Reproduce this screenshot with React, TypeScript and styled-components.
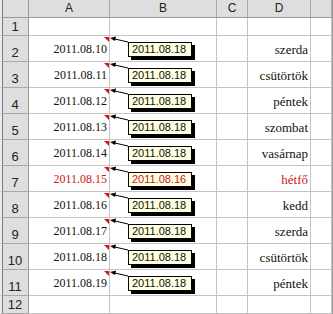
import React from 'react';
import styled, { createGlobalStyle } from 'styled-components';

const GlobalStyle = createGlobalStyle`
    html, body {
        margin: 0;
        padding: 0;
        background: #ffffff;
    }
    * {
        box-sizing: border-box;
    }
`;

interface RowData {
    date: string;
    note: string;
    day: string;
    holiday?: boolean;
}

const rows: RowData[] = [
    { date: '2011.08.10', note: '2011.08.18', day: 'szerda' },
    { date: '2011.08.11', note: '2011.08.18', day: 'csütörtök' },
    { date: '2011.08.12', note: '2011.08.18', day: 'péntek' },
    { date: '2011.08.13', note: '2011.08.18', day: 'szombat' },
    { date: '2011.08.14', note: '2011.08.18', day: 'vasárnap' },
    { date: '2011.08.15', note: '2011.08.16', day: 'hétfő', holiday: true },
    { date: '2011.08.16', note: '2011.08.18', day: 'kedd' },
    { date: '2011.08.17', note: '2011.08.18', day: 'szerda' },
    { date: '2011.08.18', note: '2011.08.18', day: 'csütörtök' },
    { date: '2011.08.19', note: '2011.08.18', day: 'péntek' },
];

const Sheet = styled.div`
    width: 333px;
    height: 314px;
    overflow: hidden;
    display: grid;
    grid-template-columns: 29px 81px 107px 31px 63px 21px 1px;
    grid-template-rows: 18px 18px repeat(10, 26px) 18px;
    background: #ffffff;
`;

const Corner = styled.div`
    background: #dedede;
    border-left: 2px solid #ececec;
    border-right: 1px solid #9a9a9a;
    border-bottom: 1px solid #9a9a9a;
    box-shadow: inset 1px 0 0 #7a7a7a;
`;

const ColHead = styled.div`
    background: #dedede;
    border-right: 1px solid #a8a8a8;
    border-bottom: 1px solid #9a9a9a;
    display: flex;
    align-items: flex-end;
    justify-content: center;
    padding-bottom: 1px;
    font-family: 'Liberation Sans', Arial, sans-serif;
    font-size: 12px;
    line-height: 15px;
    color: #222;
`;

const RowHead = styled.div`
    background: #dedede;
    border-left: 2px solid #ececec;
    border-right: 1px solid #9a9a9a;
    border-bottom: 1px solid #a8a8a8;
    box-shadow: inset 1px 0 0 #7a7a7a;
    display: flex;
    align-items: flex-end;
    justify-content: center;
    padding-bottom: 1px;
    font-family: 'Liberation Sans', Arial, sans-serif;
    font-size: 13px;
    line-height: 15px;
    color: #222;
`;

const Cell = styled.div<{ $red?: boolean; $size?: number }>`
    position: relative;
    border-right: 1px solid #c4c4c4;
    border-bottom: 1px solid #c4c4c4;
    display: flex;
    align-items: flex-end;
    justify-content: flex-end;
    padding: 0 2px 4px 0;
    font-family: 'Liberation Serif', 'Times New Roman', serif;
    font-size: ${p => p.$size ?? 12}px;
    line-height: 15px;
    color: ${p => (p.$red ? '#d01818' : '#111')};
    white-space: nowrap;
`;

const EdgeCell = styled.div`
    background: #9a9a9a;
`;

const Marker = styled.div`
    position: absolute;
    top: 1px;
    right: 0;
    width: 0;
    height: 0;
    border-top: 5px solid #e0101a;
    border-left: 5px solid transparent;
`;

const Pointer = styled.svg`
    position: absolute;
    top: 0;
    left: 80px;
    width: 20px;
    height: 10px;
    overflow: visible;
    z-index: 3;
`;

const Note = styled.div<{ $red?: boolean }>`
    position: absolute;
    top: 6px;
    left: 99px;
    width: 64px;
    height: 15px;
    z-index: 3;
    background: #ffffe1;
    border: 1px solid #000;
    box-shadow: 3px 3px 0 #000;
    font-family: 'Liberation Sans', Arial, sans-serif;
    font-size: 11px;
    line-height: 13px;
    padding-left: 3px;
    color: ${p => (p.$red ? '#c81818' : '#111')};
`;

const columns = ['A', 'B', 'C', 'D', ''];

const App: React.FC = () => {
    return (
        <>
            <GlobalStyle />
            <Sheet>
                <Corner />
                {columns.map((c, i) => (
                    <ColHead key={i}>{c}</ColHead>
                ))}
                <EdgeCell />

                <RowHead>1</RowHead>
                <Cell />
                <Cell />
                <Cell />
                <Cell />
                <Cell />
                <EdgeCell />

                {rows.map((r, i) => (
                    <React.Fragment key={i}>
                        <RowHead>{i + 2}</RowHead>
                        <Cell $red={r.holiday}>
                            {r.date}
                            <Marker />
                            <Pointer viewBox="0 0 20 10">
                                <line x1="19" y1="6" x2="4" y2="2.6" stroke="#000" strokeWidth="1" />
                                <polygon points="1,2 7,0.6 6,5" fill="#000" />
                            </Pointer>
                            <Note $red={r.holiday}>{r.note}</Note>
                        </Cell>
                        <Cell />
                        <Cell />
                        <Cell $red={r.holiday} $size={13}>{r.day}</Cell>
                        <Cell />
                        <EdgeCell />
                    </React.Fragment>
                ))}

                <RowHead>12</RowHead>
                <Cell />
                <Cell />
                <Cell />
                <Cell />
                <Cell />
                <EdgeCell />
            </Sheet>
        </>
    );
};

export default App;
